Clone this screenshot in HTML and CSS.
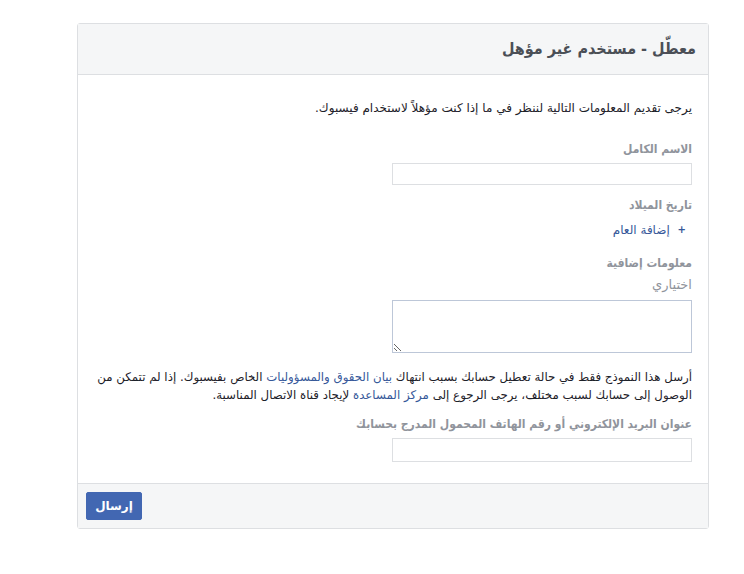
FILE: index.html
```html
<!DOCTYPE html>
<html lang="ar" dir="rtl">
<head>
<meta charset="utf-8">
<link rel="stylesheet" href="styles.css">
</head>
<body>
<div class="card">
  <div class="card-header">معطّل - مستخدم غير مؤهل</div>
  <div class="card-body">
    <p class="intro">يرجى تقديم المعلومات التالية لننظر في ما إذا كنت مؤهلاً لاستخدام فيسبوك.</p>
    <div class="label label-name">الاسم الكامل</div>
    <input class="field" type="text">
    <div class="label label-dob">تاريخ الميلاد</div>
    <a class="add-year" href="#"><span class="plus">+</span> إضافة العام</a>
    <div class="label label-extra">معلومات إضافية</div>
    <div class="optional">اختياري</div>
    <textarea class="area"></textarea>
    <p class="note">أرسل هذا النموذج فقط في حالة تعطيل حسابك بسبب انتهاك <a href="#">بيان الحقوق والمسؤوليات</a> الخاص بفيسبوك. إذا لم تتمكن من الوصول إلى حسابك لسبب مختلف، يرجى الرجوع إلى <a href="#">مركز المساعدة</a> لإيجاد قناة الاتصال المناسبة.</p>
    <div class="label label-email">عنوان البريد الإلكتروني أو رقم الهاتف المحمول المدرج بحسابك</div>
    <input class="field field-email" type="text">
  </div>
  <div class="card-footer">
    <button class="submit" type="button">إرسال</button>
  </div>
</div>
</body>
</html>
```
FILE: styles.css
```css
html, body {
  margin: 0;
  padding: 0;
  background: #fff;
}
body {
  font-family: "DejaVu Sans", "Liberation Sans", sans-serif;
  color: #1d2129;
  padding-top: 23px;
}
.card {
  width: 630px;
  margin-right: 35px;
  border: 1px solid #dddfe2;
  border-radius: 3px;
  background: #fff;
}
.card-header {
  height: 50px;
  line-height: 50px;
  background: #f5f6f7;
  border-bottom: 1px solid #dddfe2;
  padding: 0 12px;
  font-family: "DejaVu Sans Condensed", "DejaVu Sans", sans-serif;
  font-size: 16px;
  font-weight: bold;
  color: #4b4f56;
}
.card-body {
  padding: 24px 16px 21px 14px;
}
.intro {
  margin: 0 0 23px 0;
  font-size: 12px;
  line-height: 18px;
}
.label {
  font-family: "DejaVu Sans Condensed", "DejaVu Sans", sans-serif;
  font-size: 12px;
  font-weight: bold;
  color: #90949c;
  line-height: 18px;
}
.label-name {
  margin-bottom: 5px;
}
.field {
  display: block;
  box-sizing: border-box;
  width: 300px;
  height: 22px;
  border: 1px solid #dddfe2;
  margin: 0;
  padding: 0;
  background: #fff;
}
.label-dob {
  margin-top: 11px;
  margin-bottom: 7px;
}
.add-year {
  display: block;
  font-size: 12px;
  line-height: 18px;
  color: #365899;
  text-decoration: none;
  padding-right: 6px;
}
.plus {
  font-size: 10px;
  font-weight: bold;
  margin-left: 4px;
  vertical-align: 1px;
}
.label-extra {
  margin-top: 15px;
  margin-bottom: 4px;
}
.optional {
  font-size: 13px;
  color: #90949c;
  line-height: 18px;
  margin-bottom: 6px;
}
.area {
  display: block;
  box-sizing: border-box;
  width: 300px;
  height: 53px;
  border: 1px solid #bdc7d8;
  margin: 0;
  padding: 0;
  resize: both;
}
.note {
  margin: 15px 0 11px 0;
  font-size: 11.8px;
  line-height: 18px;
}
.note a {
  color: #365899;
  text-decoration: none;
}
.label-email {
  margin-bottom: 5px;
}
.field-email {
  height: 24px;
}
.card-footer {
  background: #f5f6f7;
  border-top: 1px solid #dddfe2;
  padding: 8px 8px 8px 8px;
  display: flex;
  justify-content: flex-end;
}
.submit {
  background: #4267b2;
  border: 1px solid #4267b2;
  border-radius: 2px;
  color: #fff;
  font-family: "DejaVu Sans", "Liberation Sans", sans-serif;
  font-size: 12px;
  font-weight: bold;
  height: 28px;
  width: 56px;
  padding: 0;
}
```
